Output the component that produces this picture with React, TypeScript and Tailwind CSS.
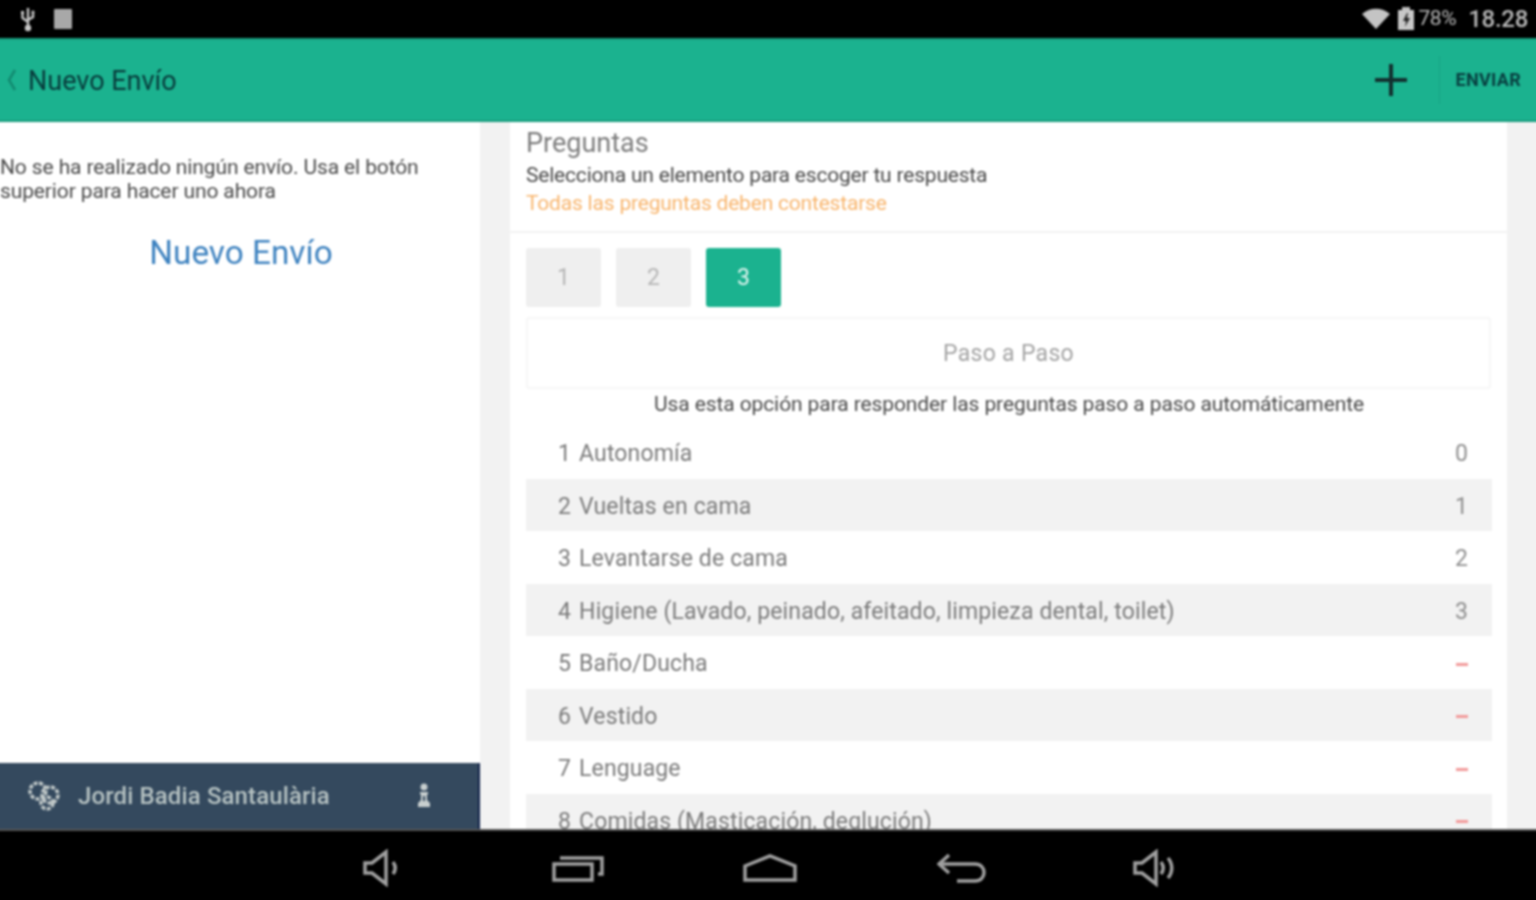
const questions = [
  { n: 1, label: "Autonomía", value: "0" },
  { n: 2, label: "Vueltas en cama", value: "1" },
  { n: 3, label: "Levantarse de cama", value: "2" },
  { n: 4, label: "Higiene (Lavado, peinado, afeitado, limpieza dental, toilet)", value: "3" },
  { n: 5, label: "Baño/Ducha", value: "-" },
  { n: 6, label: "Vestido", value: "-" },
  { n: 7, label: "Lenguage", value: "-" },
  { n: 8, label: "Comidas (Masticación, deglución)", value: "-" },
];

function StatusBar() {
  return (
    <div className="flex h-[42px] shrink-0 items-center justify-between bg-black pl-[23px] pr-[12px] pt-[4px] text-[#b4b4b4]">
      <div className="flex items-center gap-[17px]">
        <svg width="18" height="26" viewBox="0 0 18 26" fill="none" stroke="#c8c8c8" strokeWidth="2.4">
          <path d="M9 2v20M9 16 3.5 12V8M9 14l5-3V7" />
          <circle cx="9" cy="22" r="2" fill="#c8c8c8" />
          <rect x="2" y="5" width="3" height="3" fill="#c8c8c8" stroke="none" />
          <circle cx="14" cy="6" r="1.6" fill="#c8c8c8" stroke="none" />
        </svg>
        <div className="h-[20px] w-[18px] rounded-[1px] bg-[#a8a8a8]" />
      </div>
      <div className="flex items-center">
        <svg width="30" height="22" viewBox="0 0 30 22" className="mr-[6px]">
          <path d="M1 6C9-1 21-1 29 6L15 21Z" fill="#c4c4c4" />
        </svg>
        <svg width="18" height="24" viewBox="0 0 18 24" className="mr-[3px]">
          <rect x="5" y="0" width="8" height="3" fill="#c0c0c0" />
          <rect x="1" y="3" width="16" height="20" fill="#c8c8c8" />
          <path d="M10 6 6 14h3l-1 6 5-9h-3l1-5Z" fill="#222" />
        </svg>
        <span className="text-[21px] tracking-[-0.4px] text-[#b8b8b8]">78%</span>
        <span className="ml-[12px] text-[24px] font-medium leading-none tracking-[-0.3px] text-[#b8b8b8]">18.28</span>
      </div>
    </div>
  );
}

function Header() {
  return (
    <div className="flex h-[84px] shrink-0 items-center justify-between border-b-[2px] border-b-[#179c7e] border-t-[2px] border-t-[#179c7e] bg-[#1bb28f] pl-[4px] pr-[4px]">
      <div className="flex items-center pl-[6px]">
        <svg width="11" height="24" viewBox="0 0 11 24" fill="none" stroke="#128a70" strokeWidth="2.5">
          <path d="M9 2 3 12l6 10" />
        </svg>
        <span className="ml-[11px] pt-[3px] text-[27px] text-[#083c3c]">Nuevo Envío</span>
      </div>
      <div className="flex h-full items-center">
        <svg width="34" height="34" viewBox="0 0 34 34" stroke="#12302f" strokeWidth="4" className="mr-[31px]">
          <path d="M17 1v32M1 17h32" />
        </svg>
        <div className="h-[48px] w-px bg-[#19a385]" />
        <span className="mb-[2px] ml-[16px] mr-[15px] text-[18px] font-bold tracking-[0.3px] text-[#083f40]">ENVIAR</span>
      </div>
    </div>
  );
}

function LeftPane() {
  return (
    <div className="flex w-[484px] shrink-0 flex-col justify-between bg-white pl-[4px]">
      <div>
        <p className="mt-[33px] w-[440px] text-[21px] leading-[24px] tracking-[-0.12px] text-[#4a4a4a]">
          No se ha realizado ningún envío. Usa el botón superior para hacer uno ahora
        </p>
        <p className="mt-[28px] pl-[2px] text-center text-[33.3px] leading-[44px] text-[#3f83c0]">Nuevo Envío</p>
      </div>
      <div className="-ml-[4px] flex h-[66px] items-center justify-between border-r-[2px] border-[#12234a] bg-[#34495e] pl-[31px] pr-[46px]">
        <div className="flex items-center">
          <svg width="36" height="32" viewBox="0 0 36 32" fill="none" stroke="#c0c8c8" strokeWidth="3.5">
            <circle cx="11" cy="11" r="8" strokeDasharray="4 1.5" />
            <circle cx="23" cy="15" r="8" strokeDasharray="4 1.5" />
            <circle cx="20" cy="23" r="6" strokeDasharray="4 1.5" />
          </svg>
          <span className="ml-[15px] text-[24px] font-medium tracking-[0.12px] text-[#b6c2c2]">Jordi Badia Santaulària</span>
        </div>
        <svg width="16" height="26" viewBox="0 0 16 26" fill="#c8cfcf">
          <circle cx="8" cy="4" r="3.5" />
          <path d="M4 9h8v2l-1 1v5l3 3v4H2v-4l3-3v-5l-1-1Z" />
          <path d="M7 13h2v5H7Z" fill="#34495e" />
        </svg>
      </div>
    </div>
  );
}

function QuestionRow({ n, label, value, index }: { n: number; label: string; value: string; index: number }) {
  return (
    <div className={`flex h-[52.5px] shrink-0 items-center justify-between pl-[32px] pr-[24px] pt-[4px] text-[23px] tracking-[0.14px] text-[#7b7b7b] ${index % 2 === 1 ? "bg-[#f2f2f2]" : "bg-white"}`}>
      <span>
        {n}
        <span className="ml-[8px]">{label}</span>
      </span>
      {value === "-" ? (
        <div className="h-[3px] w-[12px] bg-[#f29a9a]" />
      ) : (
        <span className="text-[#8e8e8e]">{value}</span>
      )}
    </div>
  );
}

function RightPane() {
  return (
    <div className="flex min-h-0 flex-1 bg-[#f2f2f2] pl-[30px] pr-[33px]">
      <div className="flex min-w-0 flex-1 flex-col overflow-hidden bg-white">
        <div className="h-[111px] shrink-0 border-b-[2px] border-[#f2f2f2] pl-[16px]">
          <p className="pt-[3px] text-[27px] leading-[36px] text-[#7d7d7d]">Preguntas</p>
          <p className="text-[21px] leading-[28px] tracking-[-0.2px] text-[#4a4a4a]">
            Selecciona un elemento para escoger tu respuesta
          </p>
          <p className="text-[21px] leading-[28px] tracking-[-0.2px] text-[#f8b56d]">
            Todas las preguntas deben contestarse
          </p>
        </div>
        <div className="flex-1 pl-[16px] pr-[15px]">
          <div className="mt-[15px] flex gap-[15px]">
            <div className="flex h-[59px] w-[75px] items-center justify-center rounded-[3px] bg-[#efefef] pt-[2px] text-[23px] text-[#b5b5b5]">1</div>
            <div className="flex h-[59px] w-[75px] items-center justify-center rounded-[3px] bg-[#efefef] pt-[2px] text-[23px] text-[#b5b5b5]">2</div>
            <div className="flex h-[59px] w-[75px] items-center justify-center rounded-[3px] bg-[#1bb28f] pt-[2px] text-[23px] text-[#e4f6f1]">3</div>
          </div>
          <div className="mt-[10px] mr-[1px] flex h-[72px] items-center justify-center rounded-[3px] border-[2px] border-[#f6f6f6] pt-[2px] text-[23px] tracking-[0.3px] text-[#a3a3a3]">
            Paso a Paso
          </div>
          <p className="text-center text-[21px] leading-[30px] tracking-[-0.1px] text-[#4a4a4a]">
            Usa esta opción para responder las preguntas paso a paso automáticamente
          </p>
          <div className="mt-[7px] flex flex-col">
            {questions.map((q, i) => (
              <QuestionRow key={q.n} n={q.n} label={q.label} value={q.value} index={i} />
            ))}
          </div>
        </div>
      </div>
    </div>
  );
}

function NavBar() {
  return (
    <div className="flex h-[75px] shrink-0 items-center justify-center border-t-[2px] border-[#555] bg-black pb-[4px] pl-[4px] pt-[5px]">
      <div className="flex w-[192px] justify-center pr-[8px]">
        <svg width="38" height="38" viewBox="0 0 38 38" fill="none" stroke="#a0a0a0" strokeWidth="3.5">
          <path d="M2 14v10h7l14 11V3L9 14Z" />
          <path d="M30 13c3 4 3 8 0 12" />
        </svg>
      </div>
      <div className="flex w-[192px] justify-center">
        <svg width="52" height="28" viewBox="0 0 52 28" fill="none" stroke="#a0a0a0" strokeWidth="3.5">
          <rect x="2" y="10" width="38" height="16" />
          <path d="M8 4h42v16h-4" />
        </svg>
      </div>
      <div className="flex w-[192px] justify-center">
        <svg width="54" height="28" viewBox="0 0 54 28" fill="none" stroke="#a0a0a0" strokeWidth="3.5">
          <path d="M2 12 27 2l25 10v14H2Z" />
        </svg>
      </div>
      <div className="flex w-[192px] justify-center">
        <svg width="50" height="30" viewBox="0 0 50 30" fill="none" stroke="#a0a0a0" strokeWidth="3.5">
          <path d="M12 2 2 11l10 9" />
          <path d="M2 11h36c12 0 12 17 0 17H20" />
        </svg>
      </div>
      <div className="flex w-[192px] justify-center">
        <svg width="42" height="38" viewBox="0 0 42 38" fill="none" stroke="#a0a0a0" strokeWidth="3.5">
          <path d="M2 14v10h7l14 11V3L9 14Z" />
          <path d="M28 13c3 4 3 8 0 12M35 9c5 6 5 14 0 20" />
        </svg>
      </div>
    </div>
  );
}

export default function App() {
  return (
    <div className="h-[900px] w-[1536px] overflow-hidden bg-black">
      {/* 4px bleed on every side so the soft filter doesn't fade at the window edge */}
      <div className="-m-[4px] flex h-[908px] w-[1544px] flex-col overflow-hidden bg-black font-['Roboto',sans-serif] blur-[1px]">
        <StatusBar />
        <Header />
        <div className="flex min-h-0 flex-1">
          <LeftPane />
          <RightPane />
        </div>
        <NavBar />
      </div>
    </div>
  );
}
